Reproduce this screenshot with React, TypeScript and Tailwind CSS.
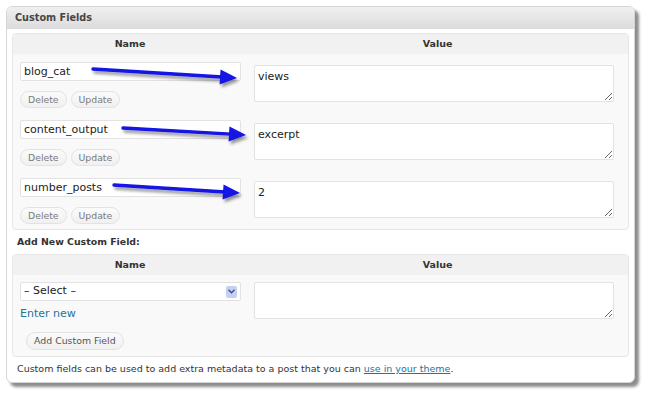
import React from "react";

const FONT = { fontFamily: '"DejaVu Sans", Verdana, sans-serif' };

const fields = [
  { key: "blog_cat", value: "views" },
  { key: "content_output", value: "excerpt" },
  { key: "number_posts", value: "2" },
];

function PillButton({ children }: { children: React.ReactNode }) {
  return (
    <button
      type="button"
      className="h-[17px] rounded-full border border-[#e2e2e2] bg-linear-to-b from-[#fbfbfb] to-[#f0f0f0] px-[7px] text-[9.3px] leading-[15px] text-[#7a7a7a]"
    >
      {children}
    </button>
  );
}

function TableHead() {
  return (
    <div className="flex h-[20px] items-center rounded-t-[4px] bg-[#f1f1f1] text-[9.5px] font-bold text-[#333]">
      <div className="w-[234px] text-center">Name</div>
      <div className="flex-1 text-center">Value</div>
    </div>
  );
}

function FieldRow({ name, value }: { name: string; value: string }) {
  return (
    <div className="flex h-[58px] pt-[8px]">
      <div className="w-[234px] pl-[7px]">
        <input
          readOnly
          value={name}
          className="block h-[19px] w-[221px] rounded-[2px] border border-[#e2e2e2] bg-white px-[3px] text-[11px] text-[#222] outline-none"
        />
        <div className="mt-[10px] flex gap-[4px]">
          <PillButton>Delete</PillButton>
          <PillButton>Update</PillButton>
        </div>
      </div>
      <div className="flex-1 pl-[7px] pr-[14px] pt-[3px]">
        <textarea
          readOnly
          value={value}
          className="block h-[37px] w-full rounded-[2px] border border-[#e2e2e2] bg-white px-[3px] pt-[4px] text-[11px] leading-[13px] text-[#222] outline-none"
        />
      </div>
    </div>
  );
}

function Arrows() {
  const arrows = [
    { x1: 93, y1: 69, x2: 237, y2: 78 },
    { x1: 123, y1: 128, x2: 246, y2: 135 },
    { x1: 114, y1: 185, x2: 240, y2: 193 },
  ];
  return (
    <svg className="pointer-events-none absolute left-0 top-0" width="650" height="399">
      <defs>
        <filter id="arrowShadow" x="-10%" y="-50%" width="120%" height="200%">
          <feDropShadow dx="2" dy="3" stdDeviation="1.5" floodColor="#000" floodOpacity="0.4" />
        </filter>
      </defs>
      {arrows.map((a, i) => {
        const dx = a.x2 - a.x1;
        const dy = a.y2 - a.y1;
        const len = Math.sqrt(dx * dx + dy * dy);
        const ux = dx / len;
        const uy = dy / len;
        const headLen = 17;
        const headHalf = 7.5;
        const bx = a.x2 - ux * headLen;
        const by = a.y2 - uy * headLen;
        const p1 = `${bx - uy * headHalf},${by + ux * headHalf}`;
        const p2 = `${bx + uy * headHalf},${by - ux * headHalf}`;
        return (
          <g key={i} filter="url(#arrowShadow)">
            <line x1={a.x1} y1={a.y1} x2={bx + ux * 2} y2={by + uy * 2} stroke="#1212e4" strokeWidth="3.4" strokeLinecap="round" />
            <polygon points={`${a.x2},${a.y2} ${p1} ${p2}`} fill="#1212e4" />
          </g>
        );
      })}
    </svg>
  );
}

export default function App() {
  return (
    <div className="relative h-[399px] w-[650px] bg-white pl-[6px] pt-[6px]" style={FONT}>
      <div className="h-[377px] w-[629px] rounded-[6px] border border-[#d6d6d6] bg-white shadow-[4px_4px_3px_rgba(0,0,0,0.45)]">
        <div className="flex h-[22px] items-center rounded-t-[6px] bg-linear-to-b from-[#efefef] to-[#dcdcdc] pl-[8px] text-[9.7px] font-bold text-[#464646]">
          Custom Fields
        </div>

        <div className="px-[5px] pt-[4px]">
          <div className="rounded-[4px] border border-[#e6e6e6] bg-[#f9f9f9] pb-[1px]">
            <TableHead />
            {fields.map((f) => (
              <FieldRow key={f.key} name={f.key} value={f.value} />
            ))}
          </div>

          <div className="flex h-[24px] items-center pl-[5px] text-[9.4px] font-bold text-[#333]">
            Add New Custom Field:
          </div>

          <div className="h-[103px] rounded-[4px] border border-[#e6e6e6] bg-[#f9f9f9]">
            <TableHead />
            <div className="flex pt-[7px]">
              <div className="w-[234px] pl-[7px]">
                <div className="flex h-[19px] w-[221px] items-center justify-between rounded-[2px] border border-[#e2e2e2] bg-white pl-[3px] pr-[3px] text-[11px] text-[#222]">
                  <span>– Select –</span>
                  <span className="flex h-[12px] w-[11px] items-center justify-center rounded-[2px] bg-[#c3d0f3]">
                    <svg width="7" height="5" viewBox="0 0 7 5">
                      <path d="M0.5 0.8 L3.5 3.8 L6.5 0.8" fill="none" stroke="#3b4f86" strokeWidth="1.4" />
                    </svg>
                  </span>
                </div>
                <div className="mt-[6px] text-[11px] leading-[13px] text-[#21759b]">Enter new</div>
                <div className="mt-[7px] pl-[6px]">
                  <button
                    type="button"
                    className="h-[18px] rounded-full border border-[#e2e2e2] bg-linear-to-b from-[#fbfbfb] to-[#f0f0f0] px-[7px] text-[9.4px] leading-[16px] text-[#555]"
                  >
                    Add Custom Field
                  </button>
                </div>
              </div>
              <div className="flex-1 pl-[7px] pr-[14px]">
                <textarea
                  readOnly
                  className="block h-[37px] w-full rounded-[2px] border border-[#e2e2e2] bg-white text-[11px] outline-none"
                />
              </div>
            </div>
          </div>

          <p className="pl-[5px] pt-[5px] text-[9.5px] leading-[14px] text-[#333]">
            Custom fields can be used to add extra metadata to a post that you can{" "}
            <a href="#" className="text-[#21759b] underline">
              use in your theme
            </a>
            .
          </p>
        </div>
      </div>
      <Arrows />
    </div>
  );
}
